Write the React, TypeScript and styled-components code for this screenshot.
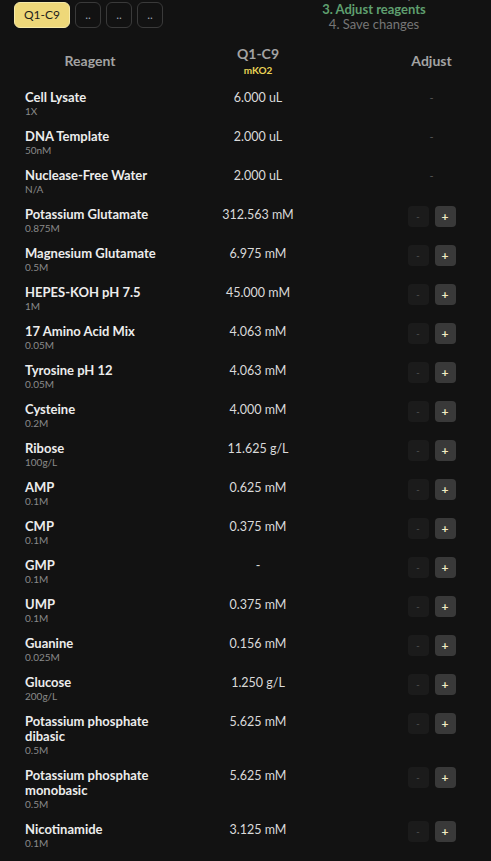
import React from 'react';
import styled, {createGlobalStyle} from 'styled-components';

const GlobalStyle = createGlobalStyle`
  html, body {
    margin: 0;
    background: #121212;
    color: #e6e6e6;
    font-family: Lato, "Noto Sans", sans-serif;
  }
`

const Page = styled.div`
  padding: 0 14px;
`

const TopBar = styled.div`
  display: flex;
  justify-content: space-between;
  align-items: flex-start;
`

const Tabs = styled.div`
  display: flex;
  gap: 5px;
  margin-top: 2px;
`

const Tab = styled.button<{active?: boolean}>`
  height: 26px;
  min-width: 26px;
  padding: 0 ${p => p.active ? '9px' : '0'};
  border-radius: 6px;
  border: 1px solid ${p => p.active ? '#f6eaa8' : '#3a3a3a'};
  background: ${p => p.active ? '#eed879' : 'transparent'};
  color: ${p => p.active ? '#1d1d1d' : '#9aa3b0'};
  font-family: inherit;
  font-size: 12px;
  line-height: 1;
`

const Steps = styled.ol`
  list-style: none;
  margin: -28px 43px 0 0;
  padding: 0;
  width: 120px;
  text-align: center;
  font-size: 13px;
  line-height: 15px;
  white-space: nowrap;
`

const Step = styled.li<{state: 'done' | 'current' | 'todo'}>`
  color: ${p => p.state === 'current' ? '#5f9f6f' : '#767676'};
  font-weight: ${p => p.state === 'current' ? 700 : 400};
`

const Table = styled.div`
  display: grid;
  grid-template-columns: 152px 184px 127px;
  margin-top: 5px;
`

const HeadCell = styled.div`
  display: flex;
  flex-direction: column;
  align-items: center;
  justify-content: center;
  padding: 8px 0 9px;
  color: #a3a3a3;
  font-weight: 700;
  font-size: 14px;
  line-height: 17px;
`

const AdjustHead = styled(HeadCell)`
  padding-left: 36px;
`

const Sample = styled.span`
  margin-top: 2px;
  color: #e8d356;
  font-size: 10px;
  line-height: 12px;
`

const NameCell = styled.div`
  padding: 5px 0 6px 11px;
`

const Name = styled.div`
  color: #ececec;
  font-weight: 700;
  font-size: 13px;
  line-height: 15px;
`

const Stock = styled.div`
  color: #8a8a8a;
  font-size: 10px;
  line-height: 13px;
`

const ValueCell = styled.div`
  padding: 5px 0 0;
  text-align: center;
  color: #dadada;
  font-size: 12.5px;
  line-height: 15px;
`

const AdjustCell = styled.div`
  display: flex;
  justify-content: center;
  align-items: flex-start;
  gap: 6px;
  padding: 4px 0 0 36px;
`

const Blank = styled.span`
  margin-top: 1px;
  color: #555;
  font-size: 11px;
  line-height: 15px;
`

const StepButton = styled.button<{kind: 'minus' | 'plus'}>`
  width: 21px;
  height: 21px;
  padding: 0;
  border: none;
  border-radius: 4px;
  background: ${p => p.kind === 'plus' ? '#393939' : '#1b1b1b'};
  color: ${p => p.kind === 'plus' ? '#f3ecc4' : '#474747'};
  font-family: inherit;
  font-weight: 700;
  font-size: ${p => p.kind === 'plus' ? '12px' : '9px'};
  line-height: 21px;
`

const Footer = styled.div`
  display: flex;
  justify-content: flex-end;
  margin: 8px -11px 0 0;
`

const SaveButton = styled.button`
  width: 161px;
  height: 38px;
  border: none;
  border-radius: 9px;
  background: #ea505c;
  color: #fff;
  font-family: inherit;
  font-weight: 700;
  font-size: 13px;
`

type Reagent = {
  name: string
  stock: string
  value: string
  fixed?: boolean
}

const reagents: Reagent[] = [
  {name: 'Cell Lysate', stock: '1X', value: '6.000 uL', fixed: true},
  {name: 'DNA Template', stock: '50nM', value: '2.000 uL', fixed: true},
  {name: 'Nuclease-Free Water', stock: 'N/A', value: '2.000 uL', fixed: true},
  {name: 'Potassium Glutamate', stock: '0.875M', value: '312.563 mM'},
  {name: 'Magnesium Glutamate', stock: '0.5M', value: '6.975 mM'},
  {name: 'HEPES-KOH pH 7.5', stock: '1M', value: '45.000 mM'},
  {name: '17 Amino Acid Mix', stock: '0.05M', value: '4.063 mM'},
  {name: 'Tyrosine pH 12', stock: '0.05M', value: '4.063 mM'},
  {name: 'Cysteine', stock: '0.2M', value: '4.000 mM'},
  {name: 'Ribose', stock: '100g/L', value: '11.625 g/L'},
  {name: 'AMP', stock: '0.1M', value: '0.625 mM'},
  {name: 'CMP', stock: '0.1M', value: '0.375 mM'},
  {name: 'GMP', stock: '0.1M', value: '-'},
  {name: 'UMP', stock: '0.1M', value: '0.375 mM'},
  {name: 'Guanine', stock: '0.025M', value: '0.156 mM'},
  {name: 'Glucose', stock: '200g/L', value: '1.250 g/L'},
  {name: 'Potassium phosphate dibasic', stock: '0.5M', value: '5.625 mM'},
  {name: 'Potassium phosphate monobasic', stock: '0.5M', value: '5.625 mM'},
  {name: 'Nicotinamide', stock: '0.1M', value: '3.125 mM'},
]

function App() {
  return (
    <Page>
      <GlobalStyle/>
      <TopBar>
        <Tabs>
          <Tab active>Q1-C9</Tab>
          <Tab>..</Tab>
          <Tab>..</Tab>
          <Tab>..</Tab>
        </Tabs>
        <Steps>
          <Step state="done">1. Pick wells</Step>
          <Step state="done">2. Choose recipe</Step>
          <Step state="current">3. Adjust reagents</Step>
          <Step state="todo">4. Save changes</Step>
        </Steps>
      </TopBar>
      <Table>
        <HeadCell>Reagent</HeadCell>
        <HeadCell>
          Q1-C9
          <Sample>mKO2</Sample>
        </HeadCell>
        <AdjustHead>Adjust</AdjustHead>
        {reagents.map(r => (
          <React.Fragment key={r.name}>
            <NameCell>
              <Name>{r.name}</Name>
              <Stock>{r.stock}</Stock>
            </NameCell>
            <ValueCell>{r.value}</ValueCell>
            <AdjustCell>
              {r.fixed ? <Blank>-</Blank> : (
                <>
                  <StepButton kind="minus">-</StepButton>
                  <StepButton kind="plus">+</StepButton>
                </>
              )}
            </AdjustCell>
          </React.Fragment>
        ))}
      </Table>
      <Footer>
        <SaveButton>Save changes</SaveButton>
      </Footer>
    </Page>
  );
}

export default App
